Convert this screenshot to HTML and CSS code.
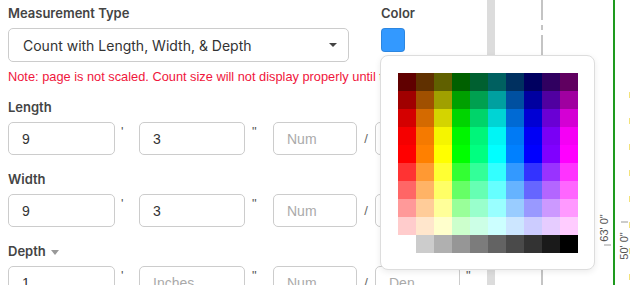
FILE: index.html
```html
<!DOCTYPE html>
<html lang="en">
<head>
  <meta charset="UTF-8">
  <meta name="viewport" content="width=device-width, initial-scale=1.0">
  <title>Count Settings</title>
  <link rel="stylesheet" href="styles.css">
</head>
<body>
  <div class="app">
    <div class="panel">
      <div class="top-row">
        <div class="type-field">
          <label class="label">Measurement Type</label>
          <div class="select">
            <span>Count with Length, Width, &amp; Depth</span>
            <span class="caret"></span>
          </div>
        </div>
        <div class="color-field">
          <label class="label">Color</label>
          <div class="swatch"></div>
        </div>
      </div>

      <p class="note">Note: page is not scaled. Count size will not display properly until the page is scaled.</p>

      <div class="dim">
        <label class="label">Length</label>
        <div class="dim-inputs">
          <input class="in-ft" type="text" value="9">
          <span class="mark m-ft">'</span>
          <input class="in-in" type="text" value="3">
          <span class="mark m-in">"</span>
          <input class="in-num" type="text" placeholder="Num">
          <span class="slash">/</span>
          <input class="in-den" type="text" placeholder="Den">
          <span class="mark m-end">"</span>
        </div>
      </div>

      <div class="dim">
        <label class="label">Width</label>
        <div class="dim-inputs">
          <input class="in-ft" type="text" value="9">
          <span class="mark m-ft">'</span>
          <input class="in-in" type="text" value="3">
          <span class="mark m-in">"</span>
          <input class="in-num" type="text" placeholder="Num">
          <span class="slash">/</span>
          <input class="in-den" type="text" placeholder="Den">
          <span class="mark m-end">"</span>
        </div>
      </div>

      <div class="dim">
        <label class="label">Depth <span class="small-caret"></span></label>
        <div class="dim-inputs">
          <input class="in-ft" type="text" value="1">
          <span class="mark m-ft">'</span>
          <input class="in-in" type="text" placeholder="Inches">
          <span class="mark m-in">"</span>
          <input class="in-num" type="text" placeholder="Num">
          <span class="slash">/</span>
          <input class="in-den" type="text" placeholder="Den">
          <span class="mark m-end">"</span>
        </div>
      </div>
    </div>

    <div class="splitter"></div>

    <div class="canvas">
      <svg width="136" height="285" viewBox="0 0 136 285">
        <line x1="47" y1="-4" x2="47" y2="285" stroke="#c4c4c4" stroke-width="2" stroke-dasharray="24 5 5 5"/>
        <line x1="135" y1="92" x2="135" y2="285" stroke="#f3e27a" stroke-width="2" stroke-dasharray="6 20"/>
        <line x1="119" y1="0" x2="119" y2="285" stroke="#1e9a1e" stroke-width="2"/>
        <line x1="109" y1="245" x2="116" y2="245" stroke="#999" stroke-width="1"/>
        <line x1="126" y1="222" x2="133" y2="222" stroke="#999" stroke-width="1"/>
        <text class="dim-text" transform="translate(113 228) rotate(-90)" text-anchor="middle">63' 0"</text>
        <text class="dim-text" transform="translate(133 246) rotate(-90)" text-anchor="middle">50' 0"</text>
      </svg>
    </div>

    <div class="picker">
      <div class="palette" id="palette"></div>
    </div>
  </div>

  <script>
    const rows = [
      ["#600000","#603000","#606000","#006000","#006030","#006060","#003060","#000060","#300060","#600060"],
      ["#a00000","#a05000","#a0a000","#00a000","#00a050","#00a0a0","#0050a0","#0000a0","#5000a0","#a000a0"],
      ["#d40000","#d46a00","#d4d400","#00d400","#00d46a","#00d4d4","#006ad4","#0000d4","#6a00d4","#d400d4"],
      ["#f50000","#f57a00","#f5f500","#00f500","#00f57a","#00f5f5","#007af5","#0000f5","#7a00f5","#f500f5"],
      ["#ff0000","#ff8000","#ffff00","#00ff00","#00ff80","#00ffff","#0080ff","#0000ff","#8000ff","#ff00ff"],
      ["#ff3333","#ff9933","#ffff33","#33ff33","#33ff99","#33ffff","#3399ff","#3333ff","#9933ff","#ff33ff"],
      ["#ff6666","#ffb366","#ffff66","#66ff66","#66ffb3","#66ffff","#66b3ff","#6666ff","#b366ff","#ff66ff"],
      ["#ff9999","#ffcc99","#ffff99","#99ff99","#99ffcc","#99ffff","#99ccff","#9999ff","#cc99ff","#ff99ff"],
      ["#ffcccc","#ffe6cc","#ffffcc","#ccffcc","#ccffe6","#ccffff","#cce6ff","#ccccff","#e6ccff","#ffccff"],
      ["#ffffff","#cccccc","#b0b0b0","#969696","#7c7c7c","#636363","#4a4a4a","#333333","#1a1a1a","#000000"]
    ];

    const palette = document.getElementById("palette");
    for (let i = 0; i < rows.length; i++) {
      for (let j = 0; j < rows[i].length; j++) {
        const cell = document.createElement("div");
        cell.className = "cell";
        cell.style.background = rows[i][j];
        palette.appendChild(cell);
      }
    }
  </script>
</body>
</html>
```

FILE: styles.css
```css
body {
  margin: 0;
  font-family: Inter, "Liberation Sans", sans-serif;
  color: #333;
  background-color: #fff;
}
.app {
  position: relative;
  display: flex;
  width: 630px;
  height: 285px;
  overflow: hidden;
}
.panel {
  width: 479px;
  flex-shrink: 0;
  padding: 4px 0 0 8px;
  overflow: hidden;
}
.label {
  display: block;
  font-size: 13px;
  line-height: 18px;
  font-weight: 600;
  color: #444;
  margin-bottom: 6px;
}
.top-row {
  display: flex;
  gap: 32px;
}
.type-field {
  width: 341px;
}
.select {
  height: 34px;
  box-sizing: border-box;
  border: 1px solid #ccc;
  border-radius: 5px;
  display: flex;
  align-items: center;
  justify-content: space-between;
  padding: 0 11px 0 14px;
  font-size: 14px;
  color: #333;
}
.caret {
  width: 0;
  height: 0;
  border-left: 4px solid transparent;
  border-right: 4px solid transparent;
  border-top: 4px solid #444;
}
.swatch {
  width: 24px;
  height: 24px;
  box-sizing: border-box;
  border-radius: 4px;
  background-color: #3399ff;
  border: 1px solid rgba(0, 0, 0, 0.12);
}
.note {
  margin: 7px 0 0;
  font-family: "Liberation Sans", Arial, sans-serif;
  font-size: 12.8px;
  line-height: 16px;
  color: #f0163c;
  white-space: nowrap;
}
.dim {
  margin-top: 13px;
}
.dim + .dim {
  margin-top: 15px;
}
.dim-inputs {
  display: flex;
  align-items: flex-start;
}
.dim-inputs input {
  height: 33px;
  box-sizing: border-box;
  border: 1px solid #ccc;
  border-radius: 5px;
  padding: 0 0 0 13px;
  font-family: "Liberation Sans", Arial, sans-serif;
  font-size: 14px;
  color: #333;
  outline: none;
}
.dim-inputs input::placeholder {
  color: #aaa;
}
.in-ft {
  width: 107px;
}
.in-in {
  width: 106px;
}
.in-num {
  width: 84px;
}
.in-den {
  width: 85px;
}
.mark {
  font-family: "Liberation Sans", Arial, sans-serif;
  font-size: 13px;
  line-height: 13px;
  color: #555;
  padding-top: 3px;
  box-sizing: border-box;
}
.m-ft {
  width: 24px;
  padding-left: 6px;
}
.m-in {
  width: 28px;
  padding-left: 7px;
}
.m-end {
  padding-left: 6px;
}
.slash {
  width: 18px;
  text-align: center;
  font-family: "Liberation Sans", Arial, sans-serif;
  font-size: 13px;
  line-height: 33px;
  color: #666;
}
.small-caret {
  display: inline-block;
  vertical-align: middle;
  margin-left: 2px;
  width: 0;
  height: 0;
  border-left: 4px solid transparent;
  border-right: 4px solid transparent;
  border-top: 5px solid #999;
}
.splitter {
  width: 8px;
  flex-shrink: 0;
  background-color: #dcdcdc;
}
.canvas {
  flex: 1;
  background-color: #fff;
}
.canvas svg {
  display: block;
}
.dim-text {
  font-family: "Liberation Sans", Arial, sans-serif;
  font-size: 11px;
  fill: #555;
}
.picker {
  position: absolute;
  left: 380px;
  top: 55px;
  width: 215px;
  height: 215px;
  box-sizing: border-box;
  padding: 17px;
  background-color: #fff;
  border: 1px solid #ddd;
  border-radius: 8px;
  box-shadow: 0 2px 6px rgba(0, 0, 0, 0.08);
}
.palette {
  display: grid;
  grid-template-columns: repeat(10, 18px);
  grid-auto-rows: 18px;
}
```
